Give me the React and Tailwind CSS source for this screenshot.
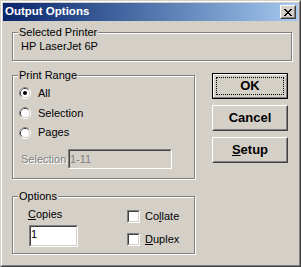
import React from "react";

const Sunken = ({ className = "", inner = "", children }) => (
  <div
    className={`border border-t-[#808080] border-l-[#808080] border-b-white border-r-white ${className}`}
  >
    <div
      className={`h-full w-full border border-t-[#404040] border-l-[#404040] border-b-[#d4d0c8] border-r-[#d4d0c8] ${inner}`}
    >
      {children}
    </div>
  </div>
);

const Group = ({ label, className = "", children }) => (
  <fieldset
    className={`border border-[#808080] shadow-[inset_1px_1px_0_#fff,1px_1px_0_#fff] px-[5px] ${className}`}
  >
    <legend className="px-[1px] leading-[13px] bg-[#d4d0c8]">{label}</legend>
    {children}
  </fieldset>
);

const Radio = ({ checked, label, className = "" }) => (
  <div className={`flex items-center ${className}`}>
    <svg width="12" height="12" viewBox="0 0 12 12" className="ml-[1px] shrink-0">
      <circle cx="6" cy="6" r="5.5" fill="none" stroke="#fff" />
      <path d="M2.11 9.89 A5.5 5.5 0 0 1 9.89 2.11" fill="none" stroke="#808080" />
      <circle cx="6" cy="6" r="4.5" fill="none" stroke="#d4d0c8" />
      <path d="M2.82 9.18 A4.5 4.5 0 0 1 9.18 2.82" fill="none" stroke="#404040" />
      <circle cx="6" cy="6" r="4" fill="#fff" />
      {checked && <circle cx="6" cy="6" r="2" fill="#000" />}
    </svg>
    <span className="ml-[7px]">{label}</span>
  </div>
);

const Check = ({ children, className = "" }) => (
  <div className={`flex items-center ${className}`}>
    <Sunken className="w-[13px] h-[13px]" inner="bg-white" />
    <span className="ml-[5px]">{children}</span>
  </div>
);

const Button = ({ children, isDefault }) =>
  isDefault ? (
    <div className="h-[26px] border border-black">
      <div className="relative h-full border border-t-white border-l-white border-b-[#808080] border-r-[#808080] flex items-center justify-center font-bold text-[13px]">
        {children}
        <div className="absolute inset-[2px] border border-dotted border-black" />
      </div>
    </div>
  ) : (
    <div className="h-[26px] border border-t-white border-l-white border-b-[#404040] border-r-[#404040]">
      <div className="h-full border border-t-[#d4d0c8] border-l-[#d4d0c8] border-b-[#808080] border-r-[#808080] flex items-center justify-center font-bold text-[13px]">
        {children}
      </div>
    </div>
  );

const App = () => {
  return (
    <div className="w-[301px] h-[267px] bg-[#d4d0c8] border border-t-[#d4d0c8] border-l-[#d4d0c8] border-b-[#404040] border-r-[#404040] font-['Liberation_Sans',Arial,sans-serif] text-[11px] text-black overflow-hidden">
      <div className="h-full border border-t-white border-l-white border-b-[#808080] border-r-[#808080] p-[1px] flex flex-col">
        {/* title bar */}
        <div className="h-[18px] shrink-0 flex items-center justify-between bg-linear-to-r from-[#0a246a] to-[#a6caf0] pl-[2px] pr-[2px]">
          <span className="text-white font-bold text-[11.5px] leading-none">
            Output Options
          </span>
          <div className="w-[16px] h-[14px] border border-t-white border-l-white border-b-[#404040] border-r-[#404040] bg-[#d4d0c8]">
            <div className="h-full border border-t-[#d4d0c8] border-l-[#d4d0c8] border-b-[#808080] border-r-[#808080] flex items-center justify-center">
              <svg width="8" height="7" viewBox="0 0 8 7" shapeRendering="crispEdges">
                <path
                  d="M0 0h2v1H0zM6 0h2v1H6zM1 1h2v1H1zM5 1h2v1H5zM2 2h4v1H2zM3 3h2v1H3zM2 4h4v1H2zM1 5h2v1H1zM5 5h2v1H5zM0 6h2v1H0zM6 6h2v1H6z"
                  fill="#000"
                />
              </svg>
            </div>
          </div>
        </div>

        <div className="pl-[9px] pr-[6px] pt-[5px]">
          <Group label="Selected Printer" className="pb-[7px]">
            <div className="pl-[3px] pt-[1px] leading-[13px]">HP LaserJet 6P</div>
          </Group>

          <div className="flex mt-[8px]">
            <div className="w-[183px]">
              <Group label="Print Range" className="pb-[9px]">
                <div className="mt-[1px]">
                  <Radio checked label="All" className="h-[20px]" />
                  <Radio label="Selection" className="h-[20px]" />
                  <Radio label="Pages" className="h-[19px]" />
                </div>
                <div className="flex items-center mt-[7px] ml-[3px]">
                  <span className="w-[47px] text-[#808080] [text-shadow:1px_1px_0_#fff]">
                    Selection
                  </span>
                  <Sunken className="w-[104px] h-[20px]" inner="bg-[#d4d0c8] flex items-center text-[#808080]">
                    1-11
                  </Sunken>
                </div>
              </Group>

              <Group label="Options" className="mt-[11px] pb-[6px]">
                <div className="flex">
                  <div className="pl-[10px] pt-[5px] w-[109px]">
                    <div className="leading-[13px]">
                      <span className="underline">C</span>opies
                    </div>
                    <Sunken className="w-[49px] h-[22px] mt-[4px] ml-[1px]" inner="bg-white leading-[13px] pt-[1px]">
                      1
                    </Sunken>
                  </div>
                  <div className="pt-[7px]">
                    <Check className="h-[13px]">
                      Co<span className="underline">l</span>late
                    </Check>
                    <Check className="h-[13px] mt-[10px]">
                      <span className="underline">D</span>uplex
                    </Check>
                  </div>
                </div>
              </Group>
            </div>

            <div className="w-[76px] ml-[17px] pt-[4px] flex flex-col gap-[6px]">
              <Button isDefault>OK</Button>
              <Button>Cancel</Button>
              <Button>
                <span>
                  <span className="underline">S</span>etup
                </span>
              </Button>
            </div>
          </div>
        </div>
      </div>
    </div>
  );
};

export default App;
